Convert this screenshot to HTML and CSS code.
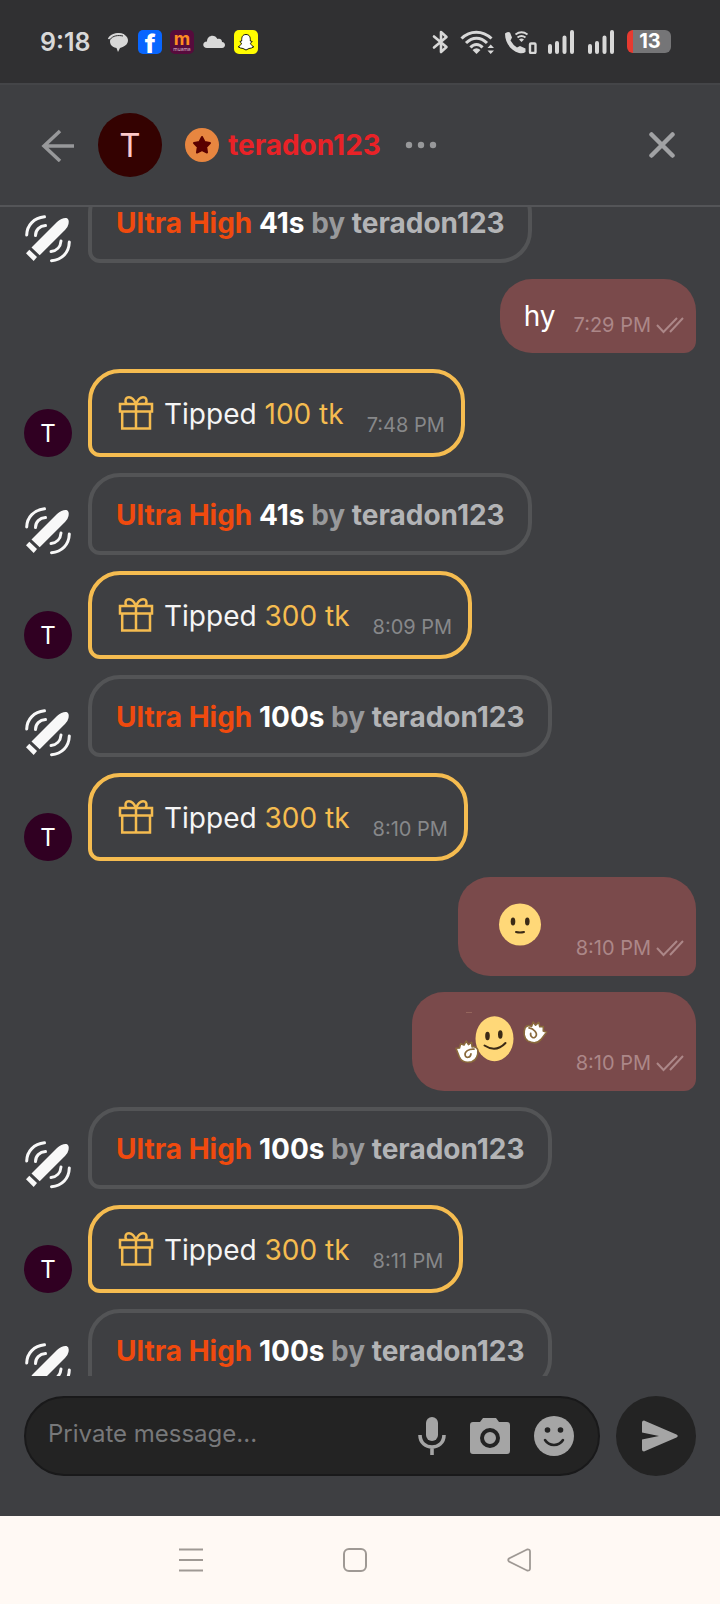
FILE: index.html
```html
<!DOCTYPE html>
<html lang="en">
<head>
<meta charset="utf-8">
<meta name="viewport" content="width=device-width, initial-scale=1">
<title>Private chat</title>
<link rel="stylesheet" href="styles.css">
</head>
<body>
<svg class="sprite" aria-hidden="true">
  <symbol id="toy" viewBox="0 0 48 48">
    <g fill="#f8f8f8"><path d="M7.500 32.500 33 7Q38 2.500 42.500 3Q45.500 4 44.500 9Q44 12 41 15L15.700 40.300Z"/><path d="M5.300 34.700 13 42 9.700 46 2 38.300Z"/></g>
    <g fill="none" stroke="#f8f8f8" stroke-width="3" stroke-linecap="round"><path d="M20.500 1.800C10 3 3 10 2.700 20"/><path d="M21.500 10.500C15.500 11 11.500 15 11.500 20.500"/><path d="M45.300 27C45 37.500 38 45 27.500 45.700"/><path d="M37 26C36.500 32 32.500 36 27 36.500"/></g>
  </symbol>
  <symbol id="gift" viewBox="0 0 40 40">
    <g fill="none" stroke="#f5bc50" stroke-width="2.500"><path d="M4 11H36V18.500H4ZM6.200 18.500V35.500H34V18.500M20 11V35.500"/><path d="M20 11C18 6 15.500 4.200 13 4.200C9.500 4.200 8.500 8 10.500 11M20 11C22 6 24.500 4.200 27 4.200C30.500 4.200 31.500 8 29.500 11"/></g>
  </symbol>
  <symbol id="ticks" viewBox="0 0 30 20"><path d="M2 10 8.500 17 22 3M15 17 28 3" fill="none" stroke="currentColor" stroke-width="2"/></symbol>
  <symbol id="signal" viewBox="0 0 26 24"><path d="M2 16V22M9 13V22M16.500 7.500V22M24 2V22" stroke="#d8d8d8" stroke-width="4" stroke-linecap="round"/></symbol>
  <symbol id="fist" viewBox="0 0 24 24">
    <path d="M1.500 6 5 6.500 7 2.500 10 4.500 13 1 14.500 5 18 3.500 17.500 8Q22 8 22.500 12C22 17 19 22 14 22.500C8 22.500 4 20 3 15Z" fill="#fff" stroke="#8a6a3c" stroke-width="1.600" stroke-linejoin="round"/>
    <path d="M19 10.500C14 9 9 11 9 14.500C9 18.500 14 18 15 14.500" fill="none" stroke="#8a6a3c" stroke-width="1.700" stroke-linecap="round"/>
  </symbol>
</svg>
<div class="app">
  <div class="status">
    <span class="clock">9:18</span>
    <div class="notes">
      <svg class="ico24" viewBox="0 0 24 24"><path d="M3 8C6 3 17 2 20 6C24 10 22 16 14 18L12 22 10.500 18C5 17 3 13 4.500 9Z" fill="#d8d8d8"/><path d="M2.500 9C6 3 13 3 18 5" fill="none" stroke="#d8d8d8" stroke-width="1.500"/><path d="M4 9.500C7 5.500 12 5 17 6" fill="none" stroke="#303032"/></svg>
      <span class="tile fb">f</span>
      <span class="tile mu"><b>m</b><small>muama</small></span>
      <svg class="ico24" viewBox="0 0 24 24"><path d="M5 18C0 18 0 11.500 5 11.500C5 5 13 3.500 15.500 9C18.500 8 20 10 20 12C24 12 24 18 20 18Z" fill="#d8d8d8"/></svg>
      <svg class="ico24" viewBox="0 0 24 24"><rect width="24" height="24" rx="5" fill="#fffc00"/><path d="M12 4.500C8.500 4.500 7.500 7 7.700 11L5.800 11.500 7.500 13.200C7 15 5.500 16.300 4.200 16.800L6.500 18 9 18.500 12 20 15 18.500 17.500 18 19.800 16.800C18.500 16.300 17 15 16.500 13.200L18.200 11.500 16.300 11C16.500 7 15.500 4.500 12 4.500Z" fill="#fff" stroke="#000" stroke-width=".9" stroke-linejoin="round"/></svg>
    </div>
    <div class="radios">
      <svg width="18" height="24" viewBox="0 0 18 24"><path d="M3 6.500 15.500 17 10 22V2L15.500 7 3 17.500" fill="none" stroke="#d8d8d8" stroke-width="2.600" stroke-linejoin="round" stroke-linecap="round"/></svg>
      <svg width="34" height="24" viewBox="0 0 34 24"><g fill="none" stroke="#d8d8d8" stroke-width="3"><path d="M1.500 8.500C10 0 22.500 0 31.500 8.500"/><path d="M6 13C12.500 6.500 20.500 6.500 27 13"/><path d="M10.500 17.500C14 13.500 19 13.500 22.500 17.500"/></g><path d="M12.500 20Q16.500 16.500 20.500 20L16.500 24ZM27.500 18 30.700 14.500 34 18ZM27.500 20.500 30.700 24 34 20.500Z" fill="#d8d8d8"/></svg>
      <svg width="32" height="24" viewBox="0 0 32 24"><path d="M0 3.500Q2.500 1 5 2.500L7 7.500 5.500 10.500Q8 15 12 17.500L15 16 20.500 18.500V22Q18 24 14 23C6 20.500 0 13 0 3.500Z" fill="#d8d8d8"/><path d="M10.500 4.500Q16.500 0 22.500 4.500M12.500 7.500Q16.500 4.500 20.500 7.500" fill="none" stroke="#d8d8d8" stroke-width="1.800"/><path d="M14 9.500Q16.500 7.500 19 9.500L16.500 12Z" fill="#d8d8d8"/><rect x="25" y="13.500" width="5.500" height="9.500" rx="1" fill="none" stroke="#d8d8d8" stroke-width="2.400"/></svg>
      <svg width="26" height="24"><use href="#signal"/></svg>
      <svg class="sim2" width="26" height="24"><use href="#signal"/></svg>
      <span class="battery">13</span>
    </div>
  </div>

  <header class="head">
    <button class="back" aria-label="Back"><svg width="34" height="34" viewBox="0 0 34 34"><path d="M33 18H3M19 3 3 18 19 33" fill="none" stroke="#97989a" stroke-width="3.500"/></svg></button>
    <span class="avatar big">T</span>
    <svg class="badge" viewBox="0 0 34 34"><circle cx="17" cy="17" r="17" fill="#e78640"/><path d="M17 9 19.600 14 25 15 21.200 19 22 24.500 17 22.200 12 24.500 12.800 19 9 15 14.400 14Z" fill="#5a0000" stroke="#5a0000" stroke-width="2" stroke-linejoin="round"/></svg>
    <strong class="name">teradon123</strong>
    <button class="more" aria-label="More"><svg width="32" height="8" viewBox="0 0 32 8" fill="#97989a"><circle cx="4" cy="4" r="3.200"/><circle cx="16" cy="4" r="3.200"/><circle cx="28" cy="4" r="3.200"/></svg></button>
    <button class="close" aria-label="Close"><svg width="26" height="26" viewBox="0 0 26 26"><path d="M2.500 2.500 23.500 23.500M23.500 2.500 2.500 23.500" stroke="#a1a2a4" stroke-width="4.500" stroke-linecap="round"/></svg></button>
  </header>

  <main class="chat">
    <div class="row"><svg class="side"><use href="#toy"/></svg><p class="bubble toy"><em>Ultra High</em> <b>41s</b> by <strong>teradon123</strong></p></div>
    <div class="row mine"><div class="bubble own"><span class="text">hy</span><span class="time">7:29 PM <svg class="ticks"><use href="#ticks"/></svg></span></div></div>
    <div class="row"><span class="avatar side">T</span><div class="bubble tip"><svg class="gift"><use href="#gift"/></svg><span class="text">Tipped <i>100 tk</i></span><span class="time">7:48 PM</span></div></div>
    <div class="row"><svg class="side"><use href="#toy"/></svg><p class="bubble toy"><em>Ultra High</em> <b>41s</b> by <strong>teradon123</strong></p></div>
    <div class="row"><span class="avatar side">T</span><div class="bubble tip"><svg class="gift"><use href="#gift"/></svg><span class="text">Tipped <i>300 tk</i></span><span class="time">8:09 PM</span></div></div>
    <div class="row"><svg class="side"><use href="#toy"/></svg><p class="bubble toy"><em>Ultra High</em> <b>100s</b> by <strong>teradon123</strong></p></div>
    <div class="row"><span class="avatar side">T</span><div class="bubble tip"><svg class="gift"><use href="#gift"/></svg><span class="text">Tipped <i>300 tk</i></span><span class="time">8:10 PM</span></div></div>
    <div class="row mine"><div class="bubble own"><svg class="emoji" width="76" height="67" viewBox="0 0 76 67"><circle cx="38" cy="31.500" r="21" fill="#ffd878"/><g fill="#3b2a16"><ellipse cx="31" cy="28.500" rx="2.300" ry="4"/><ellipse cx="45.300" cy="28.500" rx="2.300" ry="4"/></g><path d="M34 39Q38 40 42 39" fill="none" stroke="#3b2a16" stroke-width="2" stroke-linecap="round"/></svg><span class="time">8:10 PM <svg class="ticks"><use href="#ticks"/></svg></span></div></div>
    <div class="row mine"><div class="bubble own"><svg class="emoji" width="122" height="67" viewBox="0 0 122 67"><path d="M30 4.500H36" stroke="#94655c"/><ellipse cx="58.500" cy="30.700" rx="19" ry="22.500" fill="#ffd878"/><g fill="#3b2a16"><ellipse cx="51.500" cy="28" rx="2.300" ry="4.200"/><ellipse cx="64.300" cy="26.500" rx="2.300" ry="4.200"/></g><path d="M48.500 37.500Q60 45 69.500 35" fill="none" stroke="#3b2a16" stroke-width="2" stroke-linecap="round"/><use href="#fist" width="24" height="24" transform="translate(19.500 32) rotate(-12 12 12)"/><use href="#fist" width="24" height="24" transform="translate(110.500 12.500) scale(-1 1) rotate(-28 12 12)"/></svg><span class="time">8:10 PM <svg class="ticks"><use href="#ticks"/></svg></span></div></div>
    <div class="row"><svg class="side"><use href="#toy"/></svg><p class="bubble toy"><em>Ultra High</em> <b>100s</b> by <strong>teradon123</strong></p></div>
    <div class="row"><span class="avatar side">T</span><div class="bubble tip"><svg class="gift"><use href="#gift"/></svg><span class="text">Tipped <i>300 tk</i></span><span class="time">8:11 PM</span></div></div>
    <div class="row"><svg class="side"><use href="#toy"/></svg><p class="bubble toy"><em>Ultra High</em> <b>100s</b> by <strong>teradon123</strong></p></div>
  </main>

  <form class="composer">
    <div class="field">
      <input type="text" placeholder="Private message..." aria-label="Private message">
      <button type="button" aria-label="Voice"><svg width="28" height="40" viewBox="0 0 28 40"><rect x="8" y="1" width="12" height="24" rx="6" fill="#a5a5a5"/><path d="M2 19C2 35 26 35 26 19M14 31V39" fill="none" stroke="#a5a5a5" stroke-width="3.600"/></svg></button>
      <button type="button" aria-label="Photo"><svg width="40" height="40" viewBox="0 0 40 40"><path d="M3 6H10L13 2H26L29 6H37Q40 6 40 9V35Q40 38 37 38H3Q0 38 0 35V9Q0 6 3 6Z" fill="#a5a5a5"/><circle cx="20" cy="22" r="8" fill="none" stroke="#232323" stroke-width="4"/></svg></button>
      <button type="button" aria-label="Emoji"><svg width="40" height="40" viewBox="0 0 40 40"><circle cx="20" cy="20" r="20" fill="#a5a5a5"/><circle cx="13.500" cy="14" r="2.800" fill="#232323"/><circle cx="26.500" cy="14" r="2.800" fill="#232323"/><path d="M11 24C15 30.500 25 30.500 29 24" fill="none" stroke="#232323" stroke-width="2.500" stroke-linecap="round"/></svg></button>
    </div>
    <button class="send" aria-label="Send"><svg width="36" height="32" viewBox="0 0 36 32"><path d="M2 .5 34.500 14.500Q37 16 34.500 17.500L2 31.500Q0 31.500 0 29.500V19.500L17 16 0 12.500V2.500Q0 .5 2 .5Z" fill="#a5a5a5"/></svg></button>
  </form>

  <nav class="nav">
    <button aria-label="Recent apps"><svg width="24" height="24" viewBox="0 0 24 24"><path d="M0 1.500H24M0 12H24M0 22.500H24" stroke="#9f9994" stroke-width="2"/></svg></button>
    <button aria-label="Home"><svg width="24" height="24" viewBox="0 0 24 24"><rect x="1" y="1" width="22" height="22" rx="5" fill="none" stroke="#9f9994" stroke-width="2"/></svg></button>
    <button aria-label="Back"><svg width="24" height="24" viewBox="0 0 24 24"><path d="M20 1.500 2 10.500Q.5 12 2 13.500L20 22.500Q23 23 23 20.500V3.500Q23 1 20 1.500Z" fill="none" stroke="#9f9994" stroke-width="1.800"/></svg></button>
  </nav>
</div>
</body>
</html>
```
FILE: styles.css
```css
* { box-sizing: border-box; }
body { margin: 0; background: #3e3f42; font-family: Inter, "Liberation Sans", sans-serif; color: #f5f5f5; }
.sprite { position: absolute; width: 0; height: 0; }
svg { display: block; flex: none; }
button { display: flex; align-items: center; justify-content: center; padding: 0; border: 0; background: none; color: inherit; font: inherit; }
.app { display: flex; flex-direction: column; height: 100vh; }

.status { display: flex; align-items: center; flex: none; height: 83px; padding: 0 49px 0 40px; background: #303032; }
.clock { width: 66px; font-size: 25px; font-weight: 600; color: #d8d8d8; }
.notes { display: flex; align-items: center; gap: 8px; }
.ico24 { width: 24px; height: 24px; }
.tile { display: flex; flex-direction: column; align-items: center; width: 24px; height: 24px; border-radius: 5px; }
.fb { background: #0866ff; color: #fff; font-size: 26px; font-weight: 800; line-height: 28px; }
.mu { background: #560b3c; color: #ff8c22; font-size: 18px; line-height: 17px; }
.mu small { color: #d8b8c8; font-size: 5px; line-height: 5px; }
.radios { display: flex; align-items: center; gap: 11px; margin-left: auto; }
.sim2 { margin: 0 2px 0 3px; }
.battery { width: 44px; height: 23px; border-radius: 6px; border-left: 6px solid #e63a30; background: #757577; color: #fff; font-size: 20px; font-weight: 700; line-height: 23px; text-align: center; padding-right: 4px; }

.head { display: flex; align-items: center; flex: none; height: 124px; padding: 0 45px 0 41px; border-top: 2px solid #444548; border-bottom: 2px solid #545558; }
.avatar { display: flex; align-items: center; justify-content: center; flex: none; border-radius: 50%; background: #300022; color: #fff; font-size: 24px; }
.avatar.big { width: 64px; height: 64px; margin: 0 23px; background: #340201; color: #ffc9c9; font-size: 33px; font-weight: 400; }
.badge { width: 34px; height: 34px; margin-right: 9px; }
.name { font-size: 28px; font-weight: 650; line-height: 34px; color: #e92227; }
.more { margin-left: 24px; }
.close { margin-left: auto; }

.chat { flex: 1; min-height: 0; overflow: hidden; display: flex; flex-direction: column; gap: 16px; padding: 0 24px; }
.row { display: flex; align-items: flex-end; gap: 16px; flex: none; }
.row:first-child { margin-top: -26px; }
.mine { justify-content: flex-end; }
.side { width: 48px; height: 48px; }
.bubble { display: flex; margin: 0; border-radius: 32px; font-size: 28px; line-height: 34px; }
.toy { display: block; padding: 21px 23px 19px 24px; border: 4px solid #535456; border-bottom-left-radius: 12px; color: #98999b; font-weight: 650; }
.toy em { color: #f04a0e; font-style: normal; }
.toy b { color: #fff; font-weight: 650; }
.toy strong { color: #b3b4b6; font-weight: 650; }
.tip { align-items: center; padding: 0 16px 0 24px; border: 4px solid #f5bc50; border-bottom-left-radius: 12px; }
.tip .text { padding: 24px 23px 22px 8px; }
.gift { width: 40px; height: 40px; }
.tip i { color: #f5bc50; font-style: normal; }
.own { padding: 0 11px 0 24px; background: #7a4a4b; border-bottom-right-radius: 12px; }
.own .text { padding: 20px 18px 20px 0; color: #fff; }
.emoji { margin: 16px 18px 16px 0; }
.time { display: flex; align-items: center; gap: 4px; align-self: flex-end; padding-bottom: 16px; font-size: 20px; line-height: 24px; color: #87888a; }
.own .time { color: #ac8788; }
.ticks { width: 30px; height: 20px; }

.composer { display: flex; gap: 16px; flex: none; padding: 20px 24px 40px; }
.field { display: flex; align-items: center; gap: 24px; flex: 1; min-width: 0; height: 80px; padding: 0 24px 0 22px; border: 2px solid #19191a; border-radius: 40px; background: #232323; }
.field input { flex: 1; min-width: 0; padding: 0 0 4px; border: 0; outline: 0; background: none; color: #f5f5f5; font: 24px/30px Inter, sans-serif; }
.field input::placeholder { color: #77787a; opacity: 1; }
.send { width: 80px; height: 80px; padding-left: 8px; border-radius: 50%; background: #232323; }

.nav { display: flex; align-items: center; justify-content: center; gap: 140px; flex: none; height: 88px; padding-right: 10px; background: #fff9f4; }
```
